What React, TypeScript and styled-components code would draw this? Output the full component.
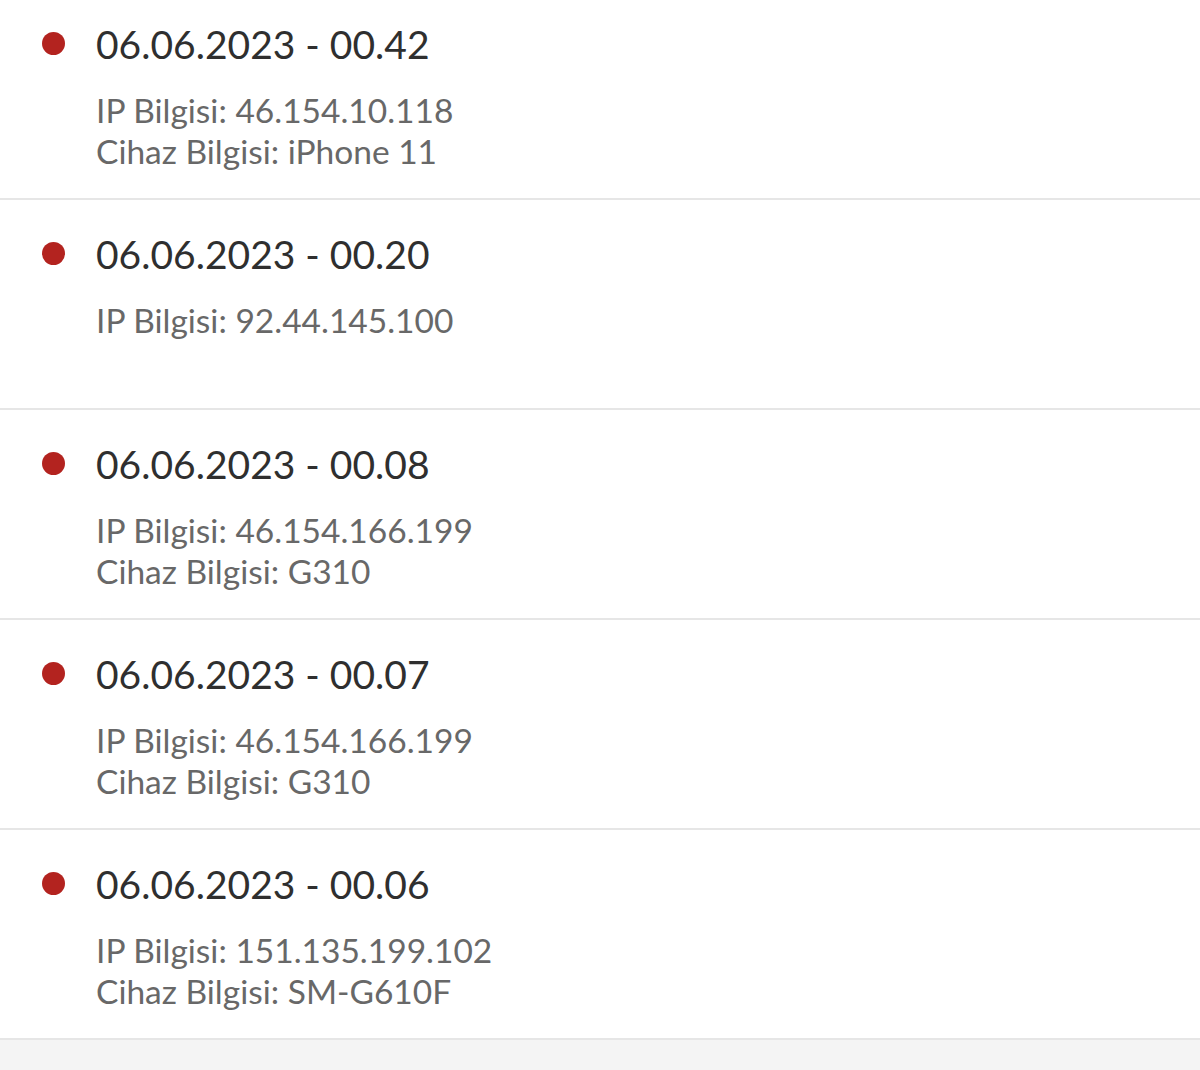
import styled, { createGlobalStyle } from 'styled-components'

interface ISession {
  date: string;
  ip: string;
  device?: string;
}

const sessions: ISession[] = [
  { date: '06.06.2023 - 00.42', ip: '46.154.10.118', device: 'iPhone 11' },
  { date: '06.06.2023 - 00.20', ip: '92.44.145.100' },
  { date: '06.06.2023 - 00.08', ip: '46.154.166.199', device: 'G310' },
  { date: '06.06.2023 - 00.07', ip: '46.154.166.199', device: 'G310' },
  { date: '06.06.2023 - 00.06', ip: '151.135.199.102', device: 'SM-G610F' },
]

const GlobalStyle = createGlobalStyle`
  html, body {
    margin: 0;
    padding: 0;
    background: #f4f4f4;
    font-family: Lato, 'Open Sans', sans-serif;
  }
`

const App = () => {
  return (
    <>
      <GlobalStyle />
      <List>
        {sessions.map((s, i) => (
          <Row key={i}>
            <Dot />
            <Content>
              <Title>{s.date}</Title>
              <Info>
                <Line>IP Bilgisi: {s.ip}</Line>
                {s.device && <Line>Cihaz Bilgisi: {s.device}</Line>}
              </Info>
            </Content>
          </Row>
        ))}
      </List>
    </>
  )
}

export default App

// the list is scrolled a little, so the first row is cut at the top
export const List = styled.div`
  margin-top: -10px;
  display: flex;
  flex-direction: column;
`

export const Row = styled.div`
  height: 178px;
  padding-top: 30px;
  background: #fff;
  border-bottom: 2px solid #e6e6e6;
  display: flex;
  align-items: flex-start;
`

export const Dot = styled.span`
  width: 23px;
  height: 23px;
  border-radius: 50%;
  background: #b3231f;
  margin: 12px 0 0 42px;
  flex-shrink: 0;
`

export const Content = styled.div`
  margin-left: 31px;
  display: flex;
  flex-direction: column;
`

export const Title = styled.div`
  font-size: 39px;
  line-height: 48px;
  color: #2f2f2f;
`

export const Info = styled.div`
  margin-top: 22px;
  display: flex;
  flex-direction: column;
`

export const Line = styled.div`
  font-size: 33.5px;
  line-height: 41px;
  color: #686868;
`
